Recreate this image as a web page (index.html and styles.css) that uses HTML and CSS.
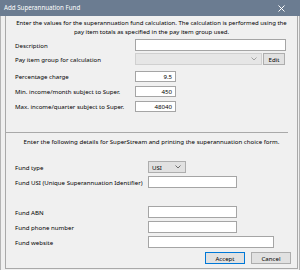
FILE: index.html
```html
<!DOCTYPE html>
<html>
<head>
<meta charset="utf-8">
<link rel="stylesheet" href="styles.css">
</head>
<body>
<div class="window">
  <div class="titlebar">
    <span class="title">Add Superannuation Fund</span>
    <svg class="close" width="7" height="7" viewBox="0 0 7 7"><path d="M0.5 0.5L6.5 6.5M6.5 0.5L0.5 6.5" stroke="#fff" stroke-width="1"/></svg>
  </div>
  <div class="frame">
    <p class="intro">Enter the values for the superannuation fund calculation. The calculation is performed using the<br>pay item totals as specified in the pay item group used.</p>

    <div class="form1">
      <div class="row r-desc"><span class="label">Description</span><span class="input w-desc"></span></div>
      <div class="row r-tight"><span class="label">Pay item group for calculation</span><span class="select disabled w-group"><svg class="chev" width="6" height="4" viewBox="0 0 6 4"><path d="M0.5 0.5L3 3L5.5 0.5" fill="none" stroke="#9a9a9a" stroke-width="0.9"/></svg></span><span class="btn w-edit">Edit</span></div>
      <div class="row r-perc"><span class="label">Percentage charge</span><span class="input num w-num">9.5</span></div>
      <div class="row r-small"><span class="label">Min. income/month subject to Super.</span><span class="input num w-num">450</span></div>
      <div class="row r-small"><span class="label">Max. income/quarter subject to Super.</span><span class="input num w-num">48040</span></div>
    </div>

    <div class="sep"></div>

    <p class="intro2">Enter the following details for SuperStream and printing the superannuation choice form.</p>

    <div class="form2">
      <div class="row r-type"><span class="label">Fund type</span><span class="select w-type">USI<svg class="chev" width="6" height="4" viewBox="0 0 6 4"><path d="M0.5 0.5L3 3L5.5 0.5" fill="none" stroke="#606060" stroke-width="0.9"/></svg></span></div>
      <div class="row r-small"><span class="label">Fund USI (Unique Superannuation Identifier)</span><span class="input w-mid"></span></div>
      <div class="row r-abn"><span class="label">Fund ABN</span><span class="input w-mid"></span></div>
      <div class="row r-small"><span class="label">Fund phone number</span><span class="input w-mid"></span></div>
      <div class="row r-small"><span class="label">Fund website</span><span class="input w-web"></span></div>
    </div>

    <div class="buttons">
      <span class="btn default">Accept</span>
      <span class="btn">Cancel</span>
    </div>
  </div>
</div>
</body>
</html>
```

FILE: styles.css
```css
html, body {
  margin: 0;
  padding: 0;
}
body {
  width: 300px;
  height: 270px;
  overflow: hidden;
  background: #f0f0f0;
  font-family: "Noto Sans", "Open Sans", sans-serif;
  font-size: 6.1px;
  color: #000;
}
.window {
  width: 300px;
  height: 270px;
  box-sizing: border-box;
  border-left: 1px solid #b4b4b4;
  border-right: 1px solid #b4b4b4;
  background: #f0f0f0;
}
.titlebar {
  height: 16px;
  margin: 0 -1px;
  background: #6b7c91;
  color: #fff;
  display: flex;
  align-items: center;
  justify-content: space-between;
  padding: 0 15px 0 4px;
  font-size: 6.2px;
}
.title {
  line-height: 16px;
}
.close {
  display: block;
}
.frame {
  margin-left: 4px;
  width: 293px;
  height: 253px;
  box-sizing: border-box;
  border: 1px solid #a9a9a9;
  border-top: none;
  padding-top: 1px;
}
.intro {
  margin: 0;
  padding-top: 2px;
  line-height: 9px;
  text-align: center;
  white-space: nowrap;
  font-size: 6px;
}
.intro2 {
  margin: 4px 0 0;
  line-height: 9px;
  text-align: center;
  white-space: nowrap;
}
.form1, .form2 {
  padding-left: 9px;
}
.row {
  display: flex;
  align-items: center;
  height: 12px;
  white-space: nowrap;
}
.form1 .label {
  width: 120px;
  flex: none;
}
.form2 .label {
  width: 133px;
  flex: none;
}
.r-desc { margin-top: 2px; }
.r-tight { margin-top: 2px; }
.r-perc { margin-top: 5px; }
.r-small { margin-top: 3px; }
.r-type { margin-top: 15px; }
.r-abn { margin-top: 18px; }

.input {
  box-sizing: border-box;
  height: 12px;
  background: #fff;
  border: 1px solid #a5a5a5;
  line-height: 10px;
  padding: 0 3px;
}
.input.num {
  text-align: right;
}
.w-desc { width: 151px; }
.w-num { width: 41px; height: 11px; line-height: 9px; }
.w-mid { width: 89px; }
.w-web { width: 126px; }

.select {
  box-sizing: border-box;
  height: 12px;
  display: flex;
  align-items: center;
  justify-content: space-between;
  padding: 0 4px 0 3px;
  background: #e1e1e1;
  border: 1px solid #adadad;
}
.select.disabled {
  background: #e6e6e6;
  border-color: #d0d0d0;
  justify-content: flex-end;
}
.w-group { width: 127px; }
.w-type { width: 38px; }
.chev { display: block; }

.btn {
  box-sizing: border-box;
  height: 12px;
  display: flex;
  align-items: center;
  justify-content: center;
  background: #e1e1e1;
  border: 1px solid #adadad;
}
.w-edit {
  width: 22px;
  margin-left: 1px;
}
.sep {
  margin-top: 20px;
  margin-right: 9px;
  height: 1px;
  background: #a9a9a9;
}
.buttons {
  display: flex;
  justify-content: flex-end;
  gap: 6px;
  margin-top: 4px;
  padding-right: 6px;
}
.buttons .btn {
  width: 40px;
}
.btn.default {
  border-color: #0078d7;
}
```
